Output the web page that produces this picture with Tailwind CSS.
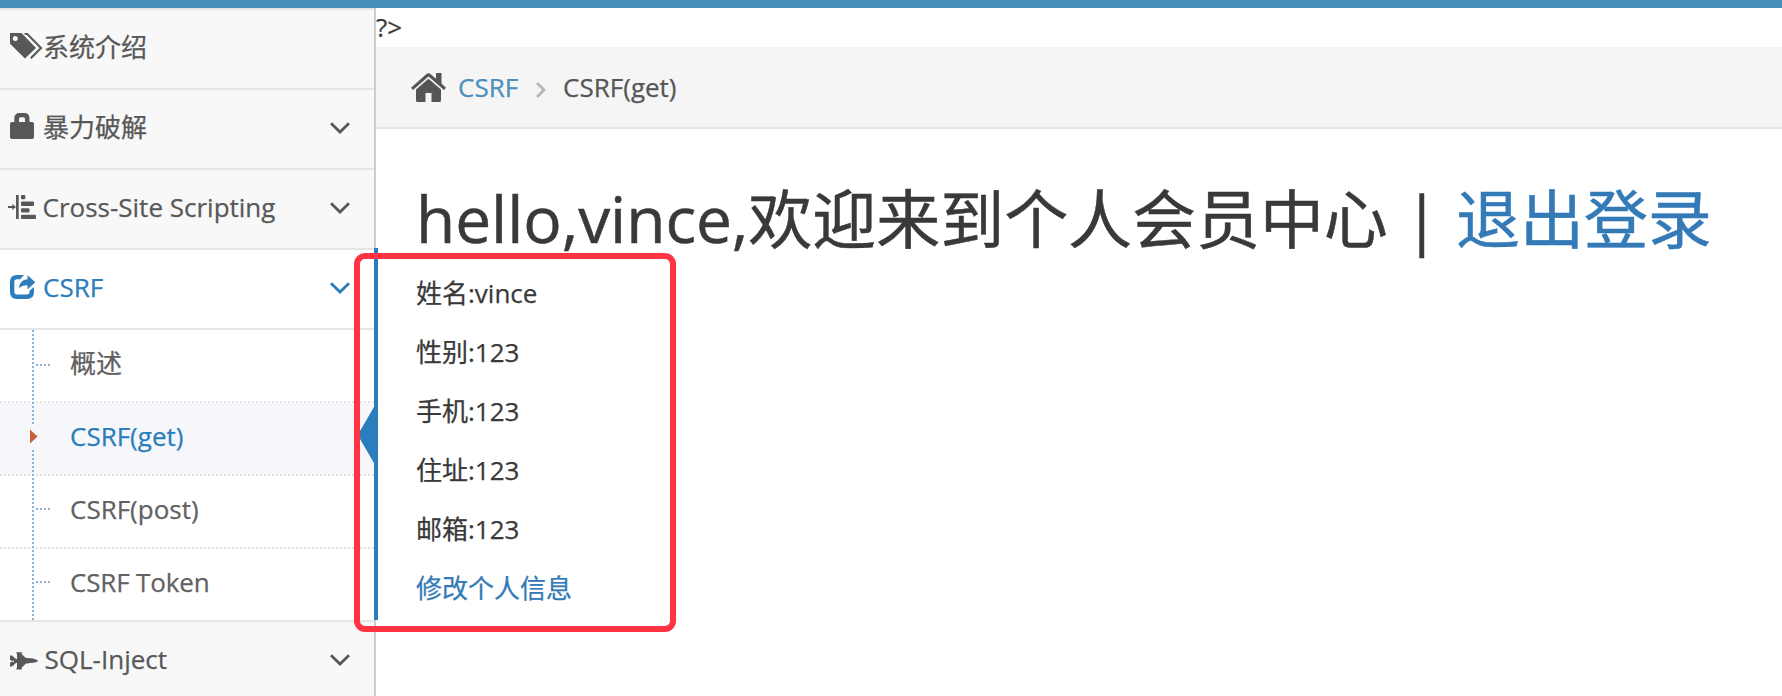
<!DOCTYPE html>
<html lang="zh-CN">
<head>
<meta charset="utf-8">
<title>CSRF(get)</title>
<script src="https://cdn.jsdelivr.net/npm/@tailwindcss/browser@4"></script>
</head>
<body>
<div class="relative h-[696px] w-[1782px] overflow-hidden bg-white font-['Open_Sans','Noto_Sans_CJK_SC',sans-serif] text-[26px] leading-[39px] text-[#393939] [-webkit-text-stroke:0.25px]">
<div class="h-2 bg-[#468eba]"></div>
<div class="flex h-[688px]">
  <aside class="relative w-[376px] shrink-0 border-r-2 border-[#ccc] bg-[#f8f8f8] text-[#585858]">
    <a class="flex h-20 border-t-2 border-[#e5e5e5]">
      <svg class="ml-2.5 mt-[23px] h-[26px] w-[33px] shrink-0" viewBox="0 0 33 26" fill="currentColor"><path fill-rule="evenodd" d="M0 0h11.500L26 15 15 25.500 0 10.800zM5.300 3a2.500 2.500 0 1 0 0 5 2.500 2.500 0 0 0 0-5z"/><path d="M14.500.6h2.300L31 15 20.800 25.300" fill="none" stroke="currentColor" stroke-width="2.100"/></svg>
      <span class="leading-[75px]">系统介绍</span>
    </a>
    <a class="flex h-20 border-t-2 border-[#e5e5e5]">
      <svg class="ml-2.5 mt-[23px] h-[26px] w-[33px] shrink-0" viewBox="0 0 33 26" fill="currentColor"><path fill-rule="evenodd" d="M4.300 9V5.500Q4.300 0 9.500 0h5q5 0 5 5.500V9H22q2 0 2 2v13q0 2-2 2H2q-2 0-2-2V11q0-2 2-2zM9 9h6V5.800Q15 4.300 13.500 4.300h-3Q9 4.300 9 5.800z"/></svg>
      <span class="leading-[75px]">暴力破解</span>
      <svg class="ml-auto mr-6 mt-8 h-3 w-5" viewBox="0 0 20 12" fill="none" stroke="currentColor" stroke-width="2.800"><path d="M1 1.200 10 10l9-8.800"/></svg>
    </a>
    <a class="flex h-20 border-t-2 border-[#e5e5e5]">
      <svg class="ml-2 mt-[25px] h-[25px] w-[34px] shrink-0" viewBox="0 0 34 25" fill="currentColor"><path d="M8 0h2.700v24H8zM0 11h4.300V9L8 12 4.300 15v-2H0z"/><rect x="13" y="0" width="4.300" height="4.300" rx="1"/><rect x="13" y="6.600" width="13" height="4.300" rx="1"/><rect x="13" y="13.200" width="8.500" height="4.300" rx="1"/><rect x="13" y="19.700" width="15" height="4.300" rx="1"/></svg>
      <span class="pl-[0.500px] leading-[74px]">Cross-Site Scripting</span>
      <svg class="ml-auto mr-6 mt-8 h-3 w-5" viewBox="0 0 20 12" fill="none" stroke="currentColor" stroke-width="2.800"><path d="M1 1.200 10 10l9-8.800"/></svg>
    </a>
    <a class="flex h-20 border-t-2 border-[#e5e5e5] bg-white text-[#2b7dbc]">
      <svg class="ml-2.5 mt-[25px] h-6 w-[33px] shrink-0" viewBox="0 0 33 24"><path d="M14.800 0C12.800 1 11.400 2.400 10.400 4.200H7Q4.300 4.200 4.300 7v9.500q0 3 2.700 3h10q2.600 0 2.600-3v-.8l4.400-3.600V17q0 7-7 7H7q-7 0-7-7V7q0-7 7-7z" fill="currentColor"/><path d="M17.500.2 25.300 7.200 17.500 14.500V10.200Q12 10 9 13.500 9.500 5 17.500 4.300z" fill="currentColor"/></svg>
      <span class="leading-[74px]">CSRF</span>
      <svg class="ml-auto mr-6 mt-8 h-3 w-5" viewBox="0 0 20 12" fill="none" stroke="currentColor" stroke-width="2.800"><path d="M1 1.200 10 10l9-8.800"/></svg>
    </a>
    <div class="relative border-t-2 border-[#e5e5e5] bg-white leading-[66px] text-[#616161]">
      <div class="h-[71px] pl-[70px]">概述</div>
      <div class="h-[73px] bg-[#f5f7fb] text-[#2b7dbc]">
        <div class="h-0.5 bg-[repeating-linear-gradient(to_right,#e2e2e2_0_2px,#fff_2px_4px)]"></div>
        <div class="pl-[70px]">CSRF(get)</div>
      </div>
      <div class="h-[73px]">
        <div class="h-0.5 bg-[repeating-linear-gradient(to_right,#e2e2e2_0_2px,#fff_2px_4px)]"></div>
        <div class="pl-[70px]">CSRF(post)</div>
      </div>
      <div class="h-[73px]">
        <div class="h-0.5 bg-[repeating-linear-gradient(to_right,#e2e2e2_0_2px,#fff_2px_4px)]"></div>
        <div class="pl-[70px] tracking-[-0.15px]">CSRF Token</div>
      </div>
      <svg class="absolute left-0 top-0 h-[290px] w-14" viewBox="0 0 56 290" fill="none" stroke="#8eb2d2" stroke-width="2" stroke-dasharray="2 2"><path d="M33 0v94M33 120v170M36 35h14M36 179h14M36 252h14"/><path d="M30 99.500 37.600 106.500 30 113.500z" fill="#c86139" stroke="none"/></svg>
      <svg class="absolute right-0 top-[77px] h-14 w-[15px]" viewBox="0 0 15 56" fill="#2b7dbc"><path d="M15 0v56L1 32q-2-4 0-8z"/></svg>
    </div>
    <a class="flex h-20 border-t-2 border-[#e5e5e5]">
      <svg class="ml-2.5 mt-[30px] h-[18px] w-[34px] shrink-0" viewBox="0 0 34 18" fill="currentColor"><path d="M0 3.500h2L6 7h1V1.500h-.7V.3H12v1.200h-1L16 6h2l3 .9L27 9l-6 1.600-3 .9h-2l-5 4.800h1v1.200H6.300v-1.200H7V11H6l-4 3.500H0v-4h1v-.8h3v-.9H1v-.9H0zM18 6.200h4Q28 8 28 9t-6 2h-4z"/></svg>
      <span class="pl-[0.500px] leading-[74px]">SQL-Inject</span>
      <svg class="ml-auto mr-6 mt-8 h-3 w-5" viewBox="0 0 20 12" fill="none" stroke="currentColor" stroke-width="2.800"><path d="M1 1.200 10 10l9-8.800"/></svg>
    </a>
    <div class="absolute -right-1 top-60 z-10 h-[372px] w-1 bg-[#2b7dbc]"></div>
  </aside>
  <main class="flex-1">
    <div>?&gt;</div>
    <nav class="flex h-[82px] items-center border-b-2 border-[#e5e5e5] bg-[#f5f5f5] pl-[35px] text-[#555]">
      <svg class="h-[29px] w-[35px]" viewBox="0 0 35 29" fill="currentColor"><path d="M17.500 5.700 30 16.500V27.500q0 1.500-1.500 1.500H20.500V20h-6v9H6.500Q5 29 5 27.500V16.500z"/><path d="M0 14.800 15.500 1q2-1.700 4 0L25 5.800V0h5.500v10.500L35 14.800 33 17 17.500 3.600 2 17z"/></svg>
      <a class="ml-3 text-[#4c8fbd]">CSRF</a>
      <svg class="ml-[18px] mt-1.5 h-4 w-2.5" viewBox="0 0 10 16" fill="none" stroke="#b2b6bf" stroke-width="2.800"><path d="M1 1 8 8l-7 7"/></svg>
      <span class="ml-[17px]">CSRF(get)</span>
    </nav>
    <section class="pl-10 pt-[58px]">
      <h1 class="whitespace-nowrap text-[64px] leading-[64px] tracking-[-0.06px] [-webkit-text-stroke:0.5px]">hello,vince,欢迎来到个人会员中心 | <a class="text-[#337ab7]">退出登录</a></h1>
      <div class="mt-[23px] flex flex-col gap-5">
        <p>姓名:vince</p><p>性别:123</p><p>手机:123</p><p>住址:123</p><p>邮箱:123</p>
        <a class="text-[#337ab7]">修改个人信息</a>
      </div>
    </section>
  </main>
</div>
<div class="absolute left-[354px] top-[253px] z-20 h-[379px] w-[322px] rounded-[11px] border-6 border-[#ff3341]"></div>
</div>
</body>
</html>
